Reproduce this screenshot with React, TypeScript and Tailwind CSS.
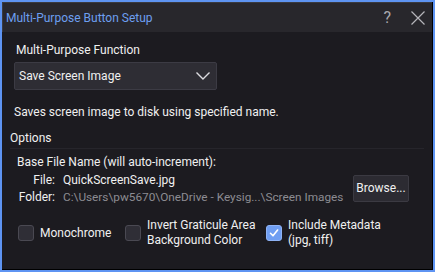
import React from "react";

function Check({ checked }: { checked?: boolean }) {
  return (
    <div
      className={
        checked
          ? "w-4 h-4 rounded-[3px] bg-[#6f9ef2] border border-[#8fb3f5] flex items-center justify-center shrink-0"
          : "w-4 h-4 rounded-[3px] bg-[#2f2e36] border border-[#4a4952] shrink-0"
      }
    >
      {checked && (
        <svg width="12" height="12" viewBox="0 0 12 12">
          <path d="M2.5 6.3 L5 8.8 L9.6 3" stroke="white" strokeWidth="1.6" fill="none" strokeLinecap="round" strokeLinejoin="round" />
        </svg>
      )}
    </div>
  );
}

export default function App() {
  return (
    <div
      className="w-[435px] h-[272px] bg-[#5e94f2] p-[2px] text-[12px] text-[#f0f0f0]"
      style={{ fontFamily: "Roboto, 'Liberation Sans', sans-serif" }}
    >
      <div className="w-full h-full bg-[#1c1b20] border-r border-b border-black flex flex-col">
        <div className="h-[30px] bg-[#28272c] border-t border-l border-[#3a3a40] flex items-center pl-[3px] pr-[6px] shrink-0">
          <span className="text-[#6d9ff0] text-[12px] flex-1 leading-none">Multi-Purpose Button Setup</span>
          <span className="text-[#a9a9ae] text-[16px] leading-none mr-[19px]">?</span>
          <svg width="16" height="16" viewBox="0 0 16 16">
            <path d="M1.5 1.5 L14.5 14.5 M14.5 1.5 L1.5 14.5" stroke="#b5b5ba" strokeWidth="1.2" />
          </svg>
        </div>
        <div className="flex flex-col pl-[8px] pr-[8px]">
          <div className="pl-[6px] mt-[10px] leading-[16px]">Multi-Purpose Function</div>
          <div className="ml-[4px] mt-[4px] w-[203px] h-[28px] bg-[#2e2d34] border border-[#3c3b44] rounded-[2px] flex items-center pl-[4px] pr-[5px]">
            <span className="flex-1">Save Screen Image</span>
            <svg width="16" height="10" viewBox="0 0 16 10">
              <path d="M1.5 1.5 L8 8 L14.5 1.5" stroke="#dcdce0" strokeWidth="1.4" fill="none" />
            </svg>
          </div>
          <div className="pl-[4px] mt-[14px] leading-[16px]">Saves screen image to disk using specified name.</div>
          <div className="mt-[10px] leading-[16px]">Options</div>
          <div className="mt-[2px] h-px bg-[#26252b]" />
          <div className="pl-[7px] mt-[5px] leading-[16px]">Base File Name (will auto-increment):</div>
          <div className="flex items-center mt-[2px]">
            <div className="flex flex-col w-[342px] whitespace-nowrap">
              <div className="flex leading-[17px]">
                <span className="w-[45px] text-right">File:</span>
                <span className="ml-[8px]">QuickScreenSave.jpg</span>
              </div>
              <div className="flex leading-[17px]">
                <span className="w-[45px] text-right">Folder:</span>
                <span className="ml-[8px] text-[11.8px] text-[#8c8c92]">C:\Users\pw5670\OneDrive - Keysig...\Screen Images</span>
              </div>
            </div>
            <div className="ml-[1px] mt-[-2px] w-[56px] h-[27px] bg-[#2c2b32] border border-[#3b3a42] rounded-[2px] flex items-center justify-center">
              Browse...
            </div>
          </div>
          <div className="flex items-center mt-[12px] pl-[8px] leading-[15px]">
            <Check />
            <span className="ml-[6px] w-[85px]">Monochrome</span>
            <Check />
            <span className="ml-[6px] w-[119px]">Invert Graticule Area<br />Background Color</span>
            <Check checked />
            <span className="ml-[6px]">Include Metadata<br />(jpg, tiff)</span>
          </div>
        </div>
      </div>
    </div>
  );
}
